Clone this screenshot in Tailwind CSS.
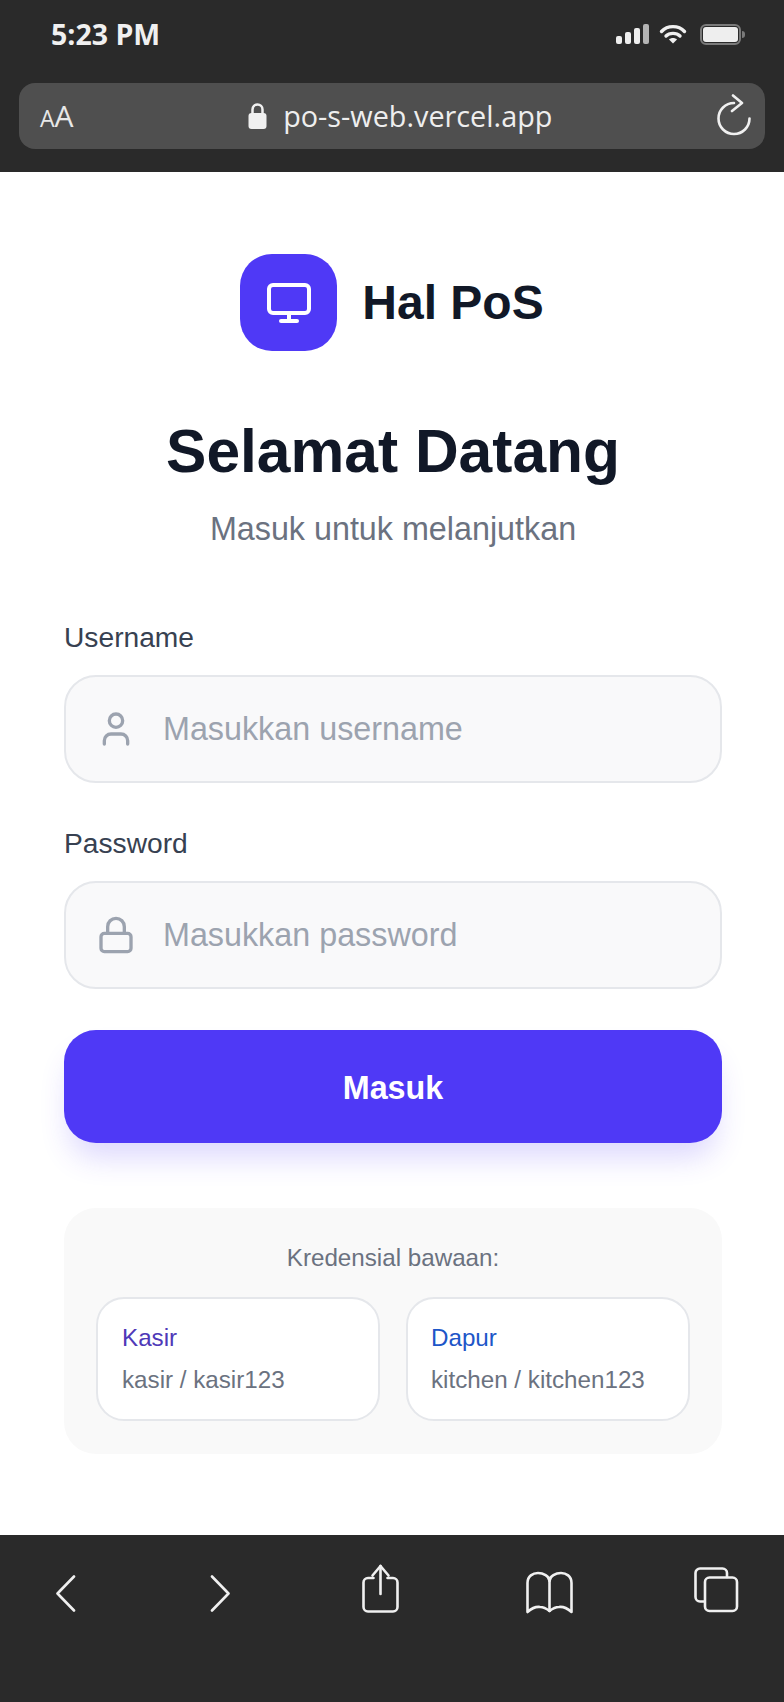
<!DOCTYPE html>
<html lang="en">
<head>
    <meta charset="UTF-8">
    <meta name="viewport" content="width=device-width, initial-scale=1.0">
    <title>Hal PoS - Masuk</title>
    <script src="https://cdn.jsdelivr.net/npm/@tailwindcss/browser@4"></script>
</head>
<body class="bg-white font-['Liberation_Sans',Arial,sans-serif]">
    <div class="flex flex-col w-[784px] h-[1702px] overflow-hidden">

        <!-- Safari top bar -->
        <header class="h-[172px] shrink-0 bg-[#2a2a2a] text-[#f0f0f0] font-['Open_Sans',sans-serif]">
            <div class="flex items-center justify-between h-[68px] pl-[51px] pr-[39px]">
                <span class="text-[28.500px] font-bold leading-none">5:23 PM</span>
                <div class="flex items-center">
                    <div class="flex items-end gap-[3px] h-[20px]">
                        <div class="w-[6px] h-[8px] rounded-[2px] bg-[#eeeeee]"></div>
                        <div class="w-[6px] h-[12px] rounded-[2px] bg-[#eeeeee]"></div>
                        <div class="w-[6px] h-[16px] rounded-[2px] bg-[#eeeeee]"></div>
                        <div class="w-[6px] h-[20px] rounded-[2px] bg-[#b4b4b4]"></div>
                    </div>
                    <svg class="ml-[10px]" width="28" height="20" viewBox="0 0 27 20" fill="none" stroke="#f0f0f0" stroke-width="3.400" stroke-linecap="round">
                        <path d="M2 7.500C8 1 19 1 25 7.500"/>
                        <path d="M6.500 12C10 8.500 17 8.500 20.500 12"/>
                        <path d="M13.500 19.500L9.500 15.500C11.500 13.500 15.500 13.500 17.500 15.500Z" fill="#f0f0f0" stroke="none"/>
                    </svg>
                    <div class="flex items-center ml-[13px]">
                        <div class="w-[41px] h-[21px] rounded-[6px] border-2 border-[#7a7a7a] p-[1px]">
                            <div class="w-full h-full rounded-[3px] bg-[#eeeeee]"></div>
                        </div>
                        <div class="w-[3px] h-[7px] ml-[1px] rounded-r-full bg-[#7a7a7a]"></div>
                    </div>
                </div>
            </div>
            <div class="flex items-center h-[66px] mt-[15px] mx-[19px] pl-[21px] pr-[13px] rounded-[16px] bg-[#4f4f4f]">
                <div class="flex items-baseline leading-none text-[#e8e8e8]">
                    <span class="text-[23px]">A</span><span class="text-[30px]">A</span>
                </div>
                <div class="flex flex-1 items-center justify-center gap-[16px] pl-[11px]">
                    <svg width="19" height="26" viewBox="0 0 19 26" fill="none">
                        <path d="M4.500 11V6.500a5 5 0 0 1 10 0V11" stroke="#f0f0f0" stroke-width="2.500"/>
                        <rect x="0.500" y="10" width="18" height="16" rx="3" fill="#f0f0f0"/>
                    </svg>
                    <span class="text-[28.800px] leading-none text-[#eeeeee]">po-s-web.vercel.app</span>
                </div>
                <svg class="-mt-[3px]" width="36" height="42" viewBox="0 0 36 42" fill="none" stroke="#f0f0f0" stroke-width="2.600" stroke-linecap="round" stroke-linejoin="round">
                    <path d="M18 9A15.500 15.500 0 1 0 33.500 24.500"/>
                    <path d="M17 1.500L26 9L16 17"/>
                </svg>
            </div>
        </header>

        <!-- Login form -->
        <main class="flex-1 pl-[64px] pr-[62px] pt-[82px]">
            <div class="flex items-center justify-center gap-[25px] pr-[2px]">
                <div class="flex items-center justify-center w-[97px] h-[97px] rounded-[32px] bg-[#4f39f6]">
                    <svg width="48" height="48" viewBox="0 0 24 24" fill="none" stroke="white" stroke-width="2" stroke-linecap="round" stroke-linejoin="round">
                        <rect x="2" y="3" width="20" height="14" rx="2"/>
                        <line x1="8" y1="21" x2="16" y2="21"/>
                        <line x1="12" y1="17" x2="12" y2="21"/>
                    </svg>
                </div>
                <span class="text-[48px] font-bold leading-none text-[#111827]">Hal PoS</span>
            </div>

            <h1 class="mt-[64px] text-center text-[60.500px] font-bold leading-[72px] text-[#111827]">Selamat Datang</h1>
            <p class="mt-[18px] text-center text-[32.300px] leading-[48px] text-[#6b7280]">Masuk untuk melanjutkan</p>

            <form class="mt-[63px]">
                <label class="block mb-[17px] text-[28.200px] leading-[42px] text-[#374151]">Username</label>
                <div class="flex items-center gap-[27px] h-[108px] pl-[30px] pr-[30px] rounded-[32px] border-2 border-[#e5e7eb] bg-[#f9f9fa]">
                    <svg class="shrink-0" width="40" height="40" viewBox="0 0 24 24" fill="none" stroke="#9ca3af" stroke-width="2" stroke-linecap="round" stroke-linejoin="round">
                        <path d="M19 21v-2a4 4 0 0 0-4-4H9a4 4 0 0 0-4 4v2"/>
                        <circle cx="12" cy="7" r="4"/>
                    </svg>
                    <input class="w-full bg-transparent text-[32.300px] outline-none placeholder:text-[#9ca3af]" placeholder="Masukkan username">
                </div>

                <label class="block mt-[39px] mb-[17px] text-[28.200px] leading-[42px] text-[#374151]">Password</label>
                <div class="flex items-center gap-[27px] h-[108px] pl-[30px] pr-[30px] rounded-[32px] border-2 border-[#e5e7eb] bg-[#f9f9fa]">
                    <svg class="shrink-0" width="40" height="40" viewBox="0 0 24 24" fill="none" stroke="#9ca3af" stroke-width="2" stroke-linecap="round" stroke-linejoin="round">
                        <rect x="3" y="11" width="18" height="11" rx="2"/>
                        <path d="M7 11V7a5 5 0 0 1 10 0v4"/>
                    </svg>
                    <input class="w-full bg-transparent text-[32.300px] outline-none placeholder:text-[#9ca3af]" placeholder="Masukkan password">
                </div>

                <button type="button" class="block w-full h-[113px] mt-[41px] pt-[3px] rounded-[32px] bg-[#4f39f6] text-[32.300px] font-bold text-white shadow-[0_20px_30px_-6px_rgba(79,57,246,0.2)]">Masuk</button>
            </form>

            <!-- Default credentials -->
            <section class="mt-[65px] h-[246px] pt-[34px] px-[32px] rounded-[32px] bg-[#f9f9f9]">
                <p class="text-center text-[24.200px] leading-[32px] text-[#6b7280]">Kredensial bawaan:</p>
                <div class="grid grid-cols-2 gap-[26px] mt-[23px]">
                    <div class="h-[124px] pt-[18px] pl-[24px] rounded-[28px] border-2 border-[#e5e7eb] bg-white">
                        <p class="text-[24.200px] leading-[42px] text-[#4f39b8]">Kasir</p>
                        <p class="text-[24.200px] leading-[42px] text-[#6b7280]">kasir / kasir123</p>
                    </div>
                    <div class="h-[124px] pt-[18px] pl-[23px] rounded-[28px] border-2 border-[#e5e7eb] bg-white">
                        <p class="text-[24.200px] leading-[42px] text-[#1d56c8]">Dapur</p>
                        <p class="text-[24.200px] leading-[42px] text-[#6b7280]">kitchen / kitchen123</p>
                    </div>
                </div>
            </section>
        </main>

        <!-- Safari toolbar -->
        <footer class="flex items-start h-[167px] shrink-0 pt-[29px] pl-[56px] bg-[#2a2a2a]">
            <svg width="20" height="50" viewBox="0 0 20 50" fill="none" stroke="#f0f0f0" stroke-width="2.600" stroke-linecap="round" stroke-linejoin="round">
                <path d="M18 12.500L1.500 29.500L18 46.500"/>
            </svg>
            <svg class="ml-[134px]" width="20" height="50" viewBox="0 0 20 50" fill="none" stroke="#f0f0f0" stroke-width="2.600" stroke-linecap="round" stroke-linejoin="round">
                <path d="M2 12.500L18.500 29.500L2 46.500"/>
            </svg>
            <svg class="ml-[132px]" width="37" height="50" viewBox="0 0 37 50" fill="none" stroke="#f0f0f0" stroke-width="2.600" stroke-linecap="round" stroke-linejoin="round">
                <path d="M11.500 14H6a4.500 4.500 0 0 0-4.500 4.500V43a4.500 4.500 0 0 0 4.500 4.500H31a4.500 4.500 0 0 0 4.500-4.500V18.500a4.500 4.500 0 0 0-4.500-4.500H25.500"/>
                <path d="M18.500 30V2"/>
                <path d="M10.500 11.500L18.500 2L26.500 11.500"/>
            </svg>
            <svg class="ml-[127px]" width="47" height="50" viewBox="0 0 47 50" fill="none" stroke="#f0f0f0" stroke-width="2.600" stroke-linecap="round" stroke-linejoin="round">
                <path d="M1.500 48V19C1.500 12 7 9 12 9C17 9 23.500 12 23.500 17C23.500 12 30 9 35 9C40 9 45.500 12 45.500 19V48C41 44 37 42.500 33 43C29 43 26 45 23.500 47C21 45 18 43 14 43C10 42.500 6 44 1.500 48Z"/>
                <path d="M23.500 17V47"/>
            </svg>
            <svg class="ml-[121px]" width="45" height="50" viewBox="0 0 45 50" fill="none" stroke="#f0f0f0" stroke-width="2.600" stroke-linecap="round" stroke-linejoin="round">
                <path d="M33 13V9a4.500 4.500 0 0 0-4.500-4.500H6A4.500 4.500 0 0 0 1.500 9V33A4.500 4.500 0 0 0 6 37.500H10.500"/>
                <rect x="11" y="13.500" width="32" height="33.500" rx="4.500"/>
            </svg>
        </footer>
    </div>
</body>
</html>
